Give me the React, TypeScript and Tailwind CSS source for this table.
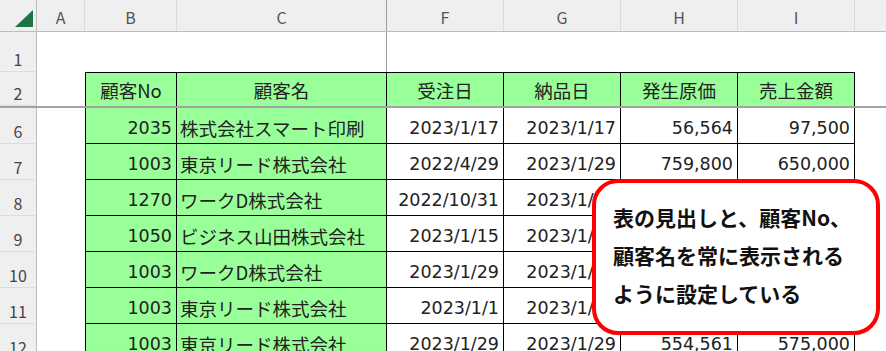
import React from "react";

type Row = {
  n: number;
  no: string;
  name: string;
  order: string;
  ship: string;
  cost: string;
  sales: string;
};

const rows: Row[] = [
  { n: 6, no: "2035", name: "株式会社スマート印刷", order: "2023/1/17", ship: "2023/1/17", cost: "56,564", sales: "97,500" },
  { n: 7, no: "1003", name: "東京リード株式会社", order: "2022/4/29", ship: "2023/1/29", cost: "759,800", sales: "650,000" },
  { n: 8, no: "1270", name: "ワークD株式会社", order: "2022/10/31", ship: "2023/1/31", cost: "421,300", sales: "480,000" },
  { n: 9, no: "1050", name: "ビジネス山田株式会社", order: "2023/1/15", ship: "2023/1/15", cost: "128,900", sales: "150,000" },
  { n: 10, no: "1003", name: "ワークD株式会社", order: "2023/1/29", ship: "2023/1/29", cost: "88,400", sales: "96,000" },
  { n: 11, no: "1003", name: "東京リード株式会社", order: "2023/1/1", ship: "2023/1/10", cost: "215,000", sales: "260,000" },
  { n: 12, no: "1003", name: "東京リード株式会社", order: "2023/1/29", ship: "2023/1/29", cost: "554,561", sales: "575,000" },
];

const font = { fontFamily: '"Noto Sans CJK JP", "Noto Sans", sans-serif' };
const numFont = { fontFamily: '"DejaVu Sans", "Noto Sans CJK JP", sans-serif' };

function RowHead({ label }: { label?: string | number }) {
  return (
    <div className="flex w-[37px] shrink-0 items-end justify-center border-r border-b border-r-[#bdbdbd] border-b-[#dcdcdc] bg-[#efefef] pb-[1px] text-[16px] leading-[22px] text-[#444]">
      {label}
    </div>
  );
}

function ColHead({ label, w, dark }: { label: string; w: string; dark?: boolean }) {
  return (
    <div
      className={`flex shrink-0 items-end justify-center border-r pb-[3px] text-[16px] leading-[22px] text-[#555] ${w} ${
        dark ? "border-r-[#9e9e9e]" : "border-r-[#dadada]"
      }`}
    >
      {label}
    </div>
  );
}

export default function App() {
  return (
    <div className="relative h-[351px] w-[886px] overflow-hidden bg-white text-[#222]" style={font}>
      {/* column letters */}
      <div className="flex h-[32px] border-b border-[#bdbdbd] bg-[#efefef]">
        <div className="relative w-[37px] shrink-0 border-r border-[#bdbdbd]">
          <svg className="absolute left-[15px] top-[10px]" width="19" height="18" viewBox="0 0 19 18">
            <polygon points="0,17 18,17 18,0" fill="#217346" />
          </svg>
        </div>
        <ColHead label="A" w="w-[48px]" />
        <ColHead label="B" w="w-[92px]" />
        <ColHead label="C" w="w-[210px]" dark />
        <ColHead label="F" w="w-[117px]" />
        <ColHead label="G" w="w-[117px]" />
        <ColHead label="H" w="w-[117px]" />
        <ColHead label="I" w="w-[117px]" />
        <div className="flex-1" />
      </div>

      {/* row 1 */}
      <div className="flex h-[40px]">
        <RowHead label={1} />
        <div className="w-[350px] shrink-0 border-r border-[#9e9e9e]" />
        <div className="flex-1" />
      </div>

      {/* row 2: table headings */}
      <div className="flex h-[34px]">
        <RowHead label={2} />
        <div className="w-[48px] shrink-0" />
        {[
          { t: "顧客No", w: "w-[92px] border-l" },
          { t: "顧客名", w: "w-[210px]" },
          { t: "受注日", w: "w-[117px]" },
          { t: "納品日", w: "w-[117px]" },
          { t: "発生原価", w: "w-[117px]" },
          { t: "売上金額", w: "w-[117px]" },
        ].map((h) => (
          <div
            key={h.t}
            className={`flex shrink-0 items-center justify-center border-t border-r border-black bg-[#99ff99] text-[18.5px] leading-[24px] ${h.w}`}
          >
            {h.t}
          </div>
        ))}
        <div className="flex-1" />
      </div>

      {/* frozen pane split */}
      <div className="h-[2px] bg-[#a3a3a3]" />

      {rows.map((r) => (
        <div key={r.n} className="flex h-[36px]">
          <RowHead label={r.n} />
          <div className="w-[48px] shrink-0" />
          <div
            className="flex w-[92px] shrink-0 items-end justify-end border-r border-b border-l border-black bg-[#99ff99] pr-[4px] pb-[3px] text-[17.5px] leading-[24px]"
            style={numFont}
          >
            {r.no}
          </div>
          <div className="flex w-[210px] shrink-0 items-end border-r border-b border-black bg-[#99ff99] pl-[3px] pb-[3px] text-[18.5px] leading-[24px]">
            {r.name}
          </div>
          {[r.order, r.ship, r.cost, r.sales].map((v, i) => (
            <div
              key={i}
              className="flex w-[117px] shrink-0 items-end justify-end border-r border-b border-black pr-[4px] pb-[3px] text-[17.5px] leading-[24px]"
              style={numFont}
            >
              {v}
            </div>
          ))}
          <div className="flex-1" />
        </div>
      ))}

      {/* callout */}
      <div className="absolute left-[592px] top-[179px] h-[156px] w-[288px] rounded-[26px] border-[4px] border-[#ff0000] bg-white pl-[17px] pt-[15px] text-[21px] font-bold leading-[38px] text-[#111]">
        <div>表の見出しと、顧客No、</div>
        <div>顧客名を常に表示される</div>
        <div>ように設定している</div>
      </div>
    </div>
  );
}
